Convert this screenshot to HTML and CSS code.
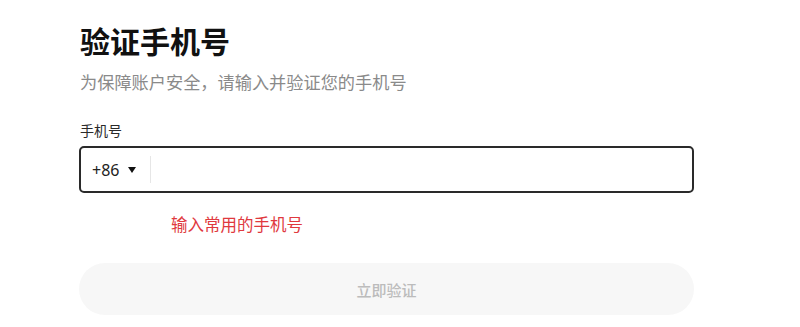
FILE: index.html
```html
<!DOCTYPE html>
<html lang="zh">
<head>
<meta charset="utf-8">
<link rel="stylesheet" href="styles.css">
</head>
<body>
<main class="page">
  <h1 class="title">验证手机号</h1>
  <p class="subtitle">为保障账户安全，请输入并验证您的手机号</p>
  <label class="label">手机号</label>
  <div class="field">
    <div class="code">+86<span class="caret"></span></div>
    <div class="divider"></div>
    <input class="input" type="text">
  </div>
  <p class="error">输入常用的手机号</p>
  <button class="submit">立即验证</button>
</main>
</body>
</html>
```
FILE: styles.css
```css
* { box-sizing: border-box; }
html, body { margin: 0; background: #fff; }
body {
  font-family: "Noto Sans CJK SC", "Noto Sans", sans-serif;
  color: #111;
}
.page {
  width: 615px;
  margin-left: 79px;
  padding-top: 18px;
  display: flex;
  flex-direction: column;
}
.title {
  margin: 0 0 0 1px;
  font-size: 30px;
  line-height: 44px;
  font-weight: 700;
  color: #111;
}
.subtitle {
  margin: 8px 0 0 1px;
  font-size: 17.2px;
  line-height: 24px;
  color: #8a8a8a;
}
.label {
  margin: 26px 0 0 1px;
  font-size: 14px;
  line-height: 20px;
  color: #2a2a2a;
}
.field {
  margin-top: 6px;
  height: 47px;
  border: 2px solid #2a2a2a;
  border-radius: 5px;
  display: flex;
  align-items: center;
}
.code {
  padding-left: 11px;
  font-family: "Noto Sans", sans-serif;
  font-size: 16px;
  color: #222;
  display: flex;
  align-items: center;
}
.caret {
  margin-left: 9px;
  width: 0;
  height: 0;
  border-left: 4px solid transparent;
  border-right: 4px solid transparent;
  border-top: 6px solid #111;
}
.divider {
  margin-left: 14px;
  width: 1px;
  height: 27px;
  background: #e6e6e6;
}
.input {
  flex: 1;
  border: none;
  outline: none;
  height: 100%;
  background: transparent;
  font-size: 16px;
}
.error {
  margin: 19px 0 0 92px;
  font-size: 16.5px;
  line-height: 24px;
  color: #e0393e;
}
.submit {
  margin-top: 27px;
  height: 52px;
  border: none;
  border-radius: 26px;
  background: #f7f7f7;
  color: #bcbcbc;
  font-family: "Noto Sans CJK SC", sans-serif;
  font-size: 15px;
  font-weight: 500;
  padding: 0;
}
```
